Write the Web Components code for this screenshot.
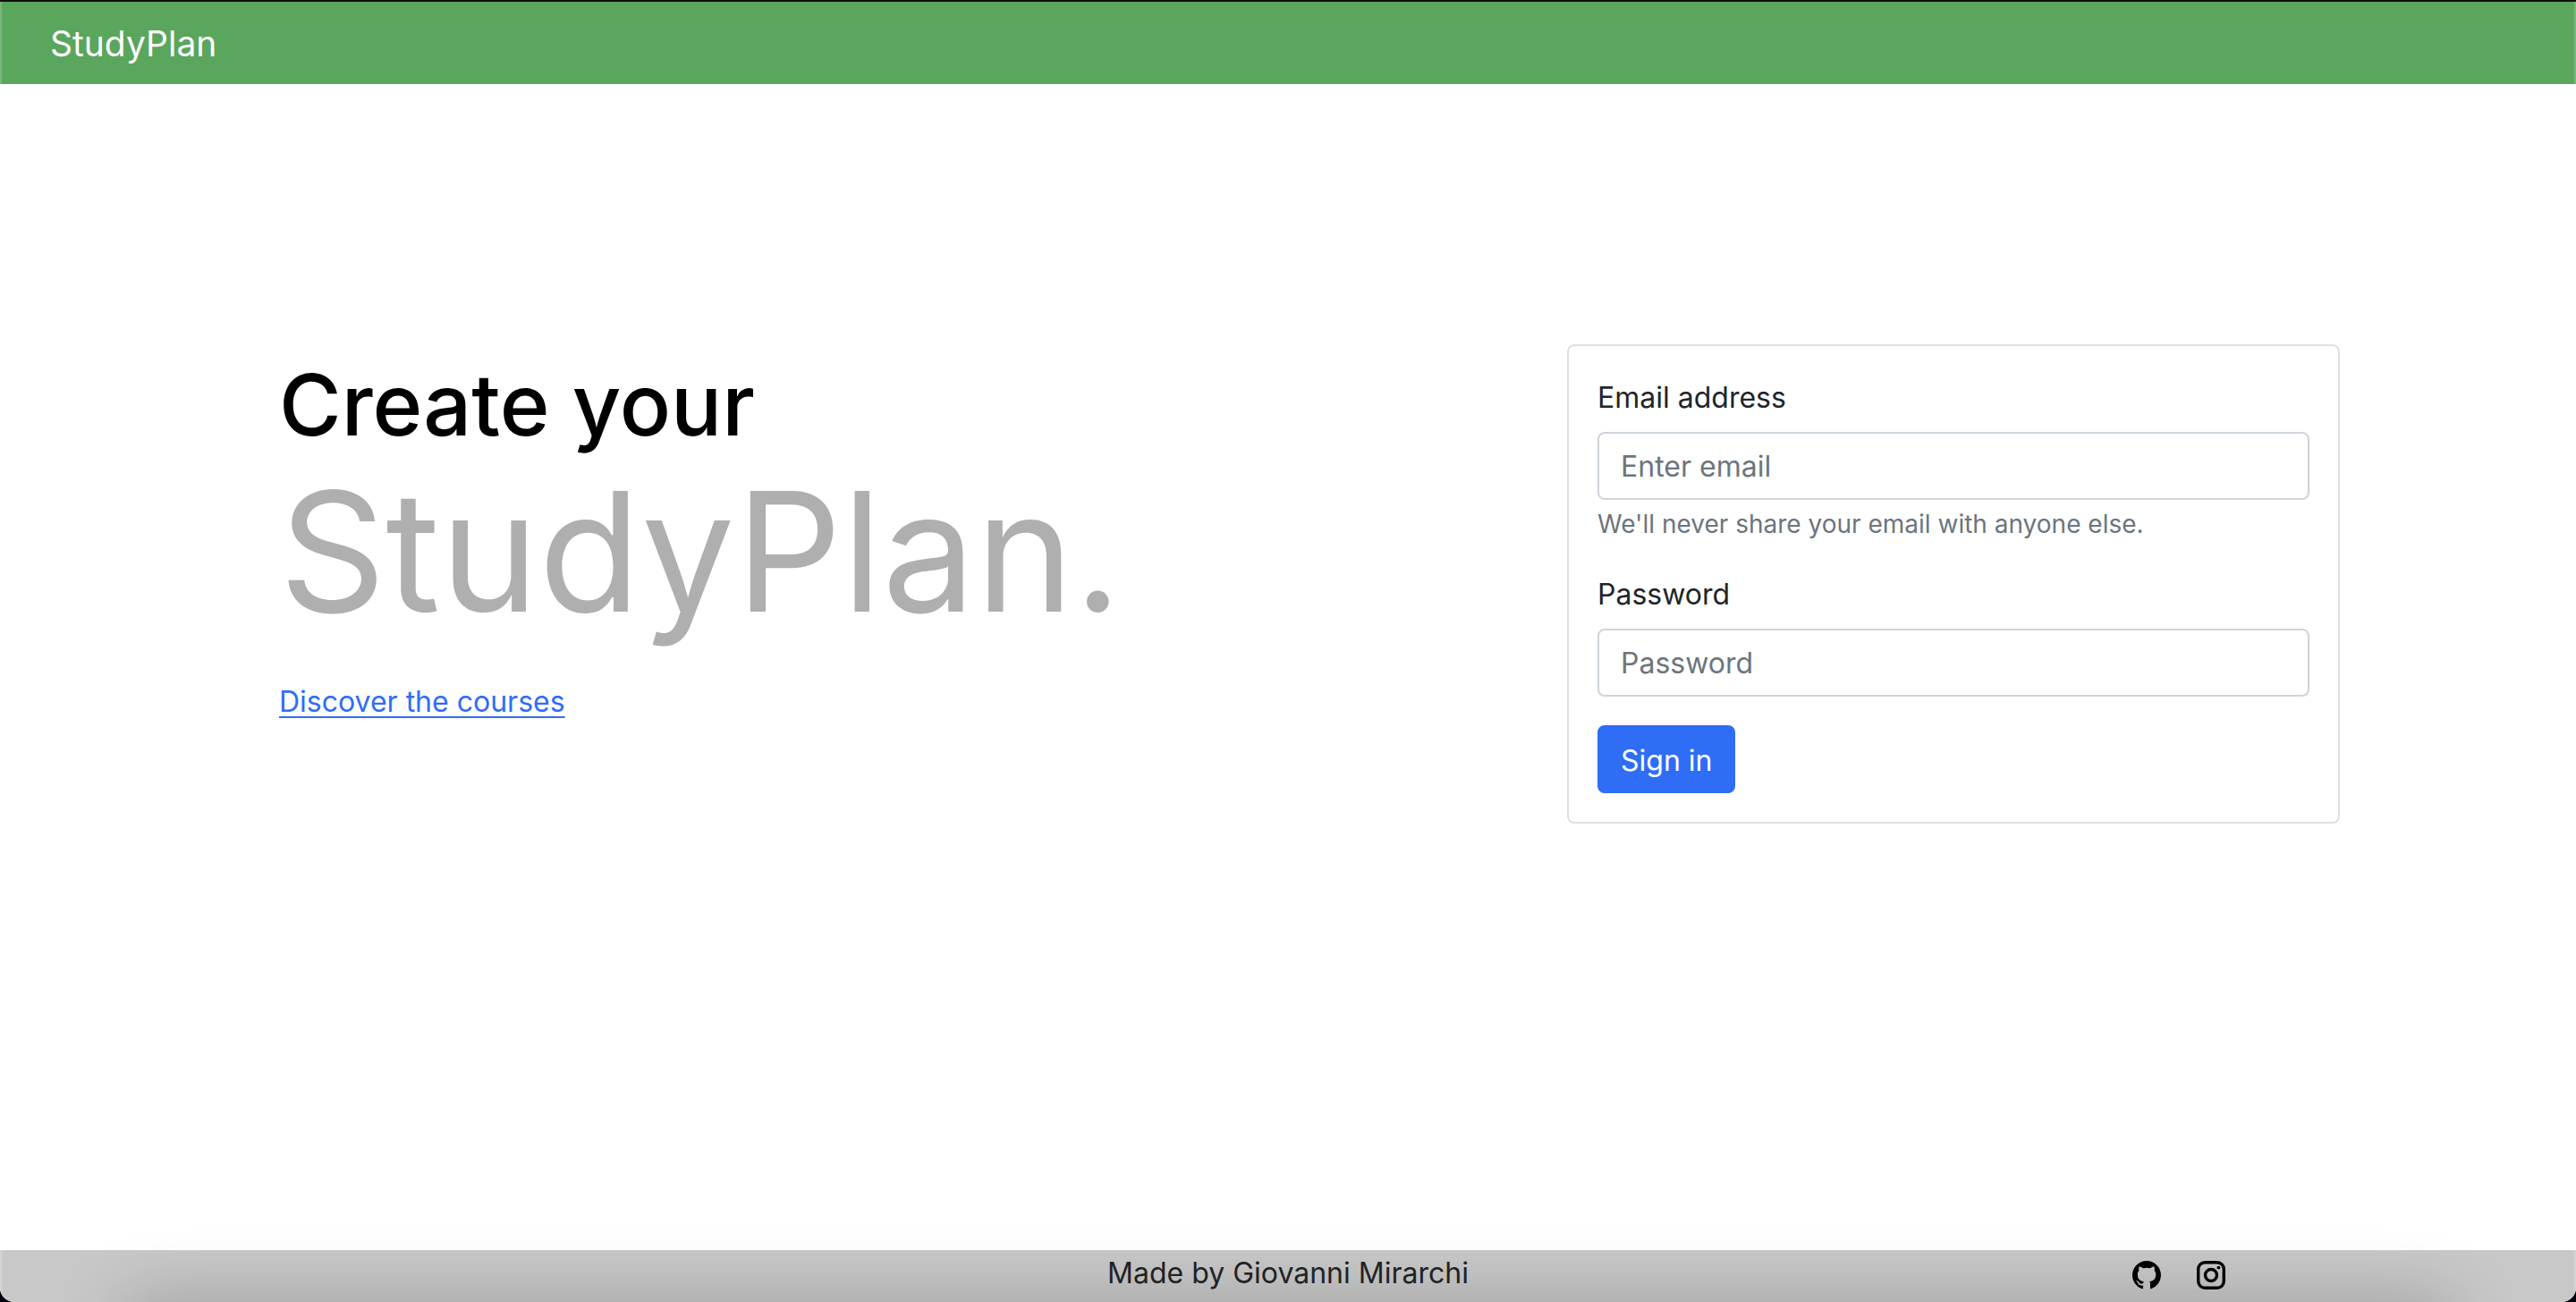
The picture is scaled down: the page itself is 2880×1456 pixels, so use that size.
<!DOCTYPE html>
<html lang="en">
<head>
<meta charset="utf-8">
<meta name="viewport" content="width=device-width, initial-scale=1">
<title>StudyPlan</title>
<style>
  body {
    margin: 0;
    background: #fff;
    color: #212529;
    font: 400 32px/48px Inter, "Liberation Sans", sans-serif;
  }
</style>
</head>
<body>
<study-app>
  <study-navbar slot="header">StudyPlan</study-navbar>
  <study-hero>
    Create your
    <span slot="name">StudyPlan.</span>
    <span slot="link">Discover the courses</span>
  </study-hero>
  <login-card></login-card>
  <study-footer slot="footer">Made by Giovanni Mirarchi</study-footer>
</study-app>

<script>
  function define(name, markup) {
    const template = document.createElement('template');
    template.innerHTML = '<style>*, *::before, *::after { box-sizing: border-box; }</style>' + markup;
    customElements.define(name, class extends HTMLElement {
      constructor() {
        super();
        this.attachShadow({ mode: 'open' }).append(template.content.cloneNode(true));
      }
    });
  }

  define('study-app', `
    <style>
      :host {
        display: flex; flex-direction: column; min-height: 100vh;
        position: relative; overflow: hidden; background: #05000f;
      }
      .window {
        flex: 1; display: flex; flex-direction: column;
        border-top: 2px solid #111;
        border-radius: 0 0 16px 16px;
        background: #fff; overflow: hidden; position: relative;
      }
      .window::before {
        content: ""; position: absolute; left: 140px; right: 140px; top: 100%; height: 80px;
        box-shadow: 0 0 80px rgba(0, 0, 0, .22); z-index: 1; pointer-events: none;
      }
      .window::after {
        content: ""; position: absolute; inset: 0; z-index: 2; pointer-events: none;
        border: solid rgba(255, 255, 255, .2); border-width: 0 2px;
      }
      main {
        flex: 1; display: grid; grid-template-columns: 1fr 1fr; align-items: start;
        padding: 20vh 0 64px;
      }
    </style>
    <div class="window">
      <slot name="header"></slot>
      <main><slot></slot></main>
      <slot name="footer"></slot>
    </div>
  `);

  define('study-navbar', `
    <style>
      :host { display: block; }
      nav { display: flex; background: #59a65c; padding: 17px 56px 15px; }
      a { color: #fff; text-decoration: none; font-size: 39px; line-height: 60px; }
    </style>
    <nav><a href="#"><slot></slot></a></nav>
  `);

  define('study-hero', `
    <style>
      :host { display: block; margin-left: calc(20% + 24px); }
      h1 { margin: 0 0 48px; font-weight: 500; font-size: 95px; line-height: 136px; color: #000; white-space: nowrap; }
      .name { display: block; font-weight: 400; font-size: 186px; line-height: 192px; color: #afafaf; }
      a { color: #2f6df6; text-underline-offset: 5px; text-decoration-thickness: 2px; }
    </style>
    <h1><slot></slot><span class="name"><slot name="name"></slot></span></h1>
    <a href="#"><slot name="link"></slot></a>
  `);

  define('login-card', `
    <style>
      :host { display: block; width: 60%; margin-left: calc(20% + 24px); }
      form { padding: 32px; border: 2px solid #dfdfdf; border-radius: 8px; background: #fff; }
      .field { margin-bottom: 32px; }
      label { display: block; padding: 2px 0 14px; }
      input {
        display: block; width: 100%; height: 76px; padding: 12px 24px;
        border: 2px solid #ced4da; border-radius: 8px; background: #fff;
        color: #212529; font: inherit;
      }
      input::placeholder { color: #6c757d; opacity: 1; }
      small { display: block; padding-top: 6px; font-size: 28px; line-height: 42px; color: #6c757d; }
      button {
        display: block; height: 76px; padding: 14px 24px 12px; border: 2px solid #2f6df6;
        border-radius: 8px; background: #2f6df6; color: #fff; font: inherit;
      }
    </style>
    <form>
      <div class="field">
        <label for="email">Email address</label>
        <input id="email" type="email" placeholder="Enter email" aria-describedby="hint">
        <small id="hint">We'll never share your email with anyone else.</small>
      </div>
      <div class="field">
        <label for="password">Password</label>
        <input id="password" type="password" placeholder="Password">
      </div>
      <button type="button">Sign in</button>
    </form>
  `);

  define('study-footer', `
    <style>
      :host { display: block; }
      footer {
        display: grid; grid-template-columns: repeat(3, 1fr);
        min-height: 58px; background: #c8c8c8;
      }
      .credit { grid-column: 2; padding-top: 2px; text-align: center; }
      .social { display: flex; gap: 40px; padding: 12px 0 0 calc(50% - 16px); }
      a { color: #000; height: 32px; }
      svg { display: block; width: 32px; height: 32px; }
    </style>
    <footer>
      <span class="credit"><slot></slot></span>
      <div class="social">
        <a href="#" aria-label="GitHub">
          <svg viewBox="0 0 16 16" fill="currentColor"><path d="M8 0C3.58 0 0 3.58 0 8c0 3.54 2.29 6.53 5.47 7.59.4.07.55-.17.55-.38 0-.19-.01-.82-.01-1.49-2.01.37-2.53-.49-2.69-.94-.09-.23-.48-.94-.82-1.13-.28-.15-.68-.52-.01-.53.63-.01 1.08.58 1.23.82.72 1.21 1.87.87 2.33.66.07-.52.28-.87.51-1.07-1.78-.2-3.64-.89-3.64-3.95 0-.87.31-1.59.82-2.15-.08-.2-.36-1.02.08-2.12 0 0 .67-.21 2.2.82.64-.18 1.32-.27 2-.27s1.36.09 2 .27c1.53-1.04 2.2-.82 2.2-.82.44 1.1.16 1.92.08 2.12.51.56.82 1.27.82 2.15 0 3.07-1.87 3.75-3.65 3.95.29.25.54.73.54 1.48 0 1.07-.01 1.93-.01 2.2 0 .21.15.46.55.38A8.01 8.01 0 0 0 16 8c0-4.42-3.58-8-8-8"/></svg>
        </a>
        <a href="#" aria-label="Instagram">
          <svg viewBox="0 0 32 32" fill="none" stroke="currentColor" stroke-width="3.4"><rect x="1.7" y="1.7" width="28.6" height="28.6" rx="7.5"/><circle cx="16" cy="16" r="6.5"/><circle cx="24.4" cy="7.6" r="1.9" fill="currentColor" stroke="none"/></svg>
        </a>
      </div>
    </footer>
  `);
</script>
</body>
</html>
